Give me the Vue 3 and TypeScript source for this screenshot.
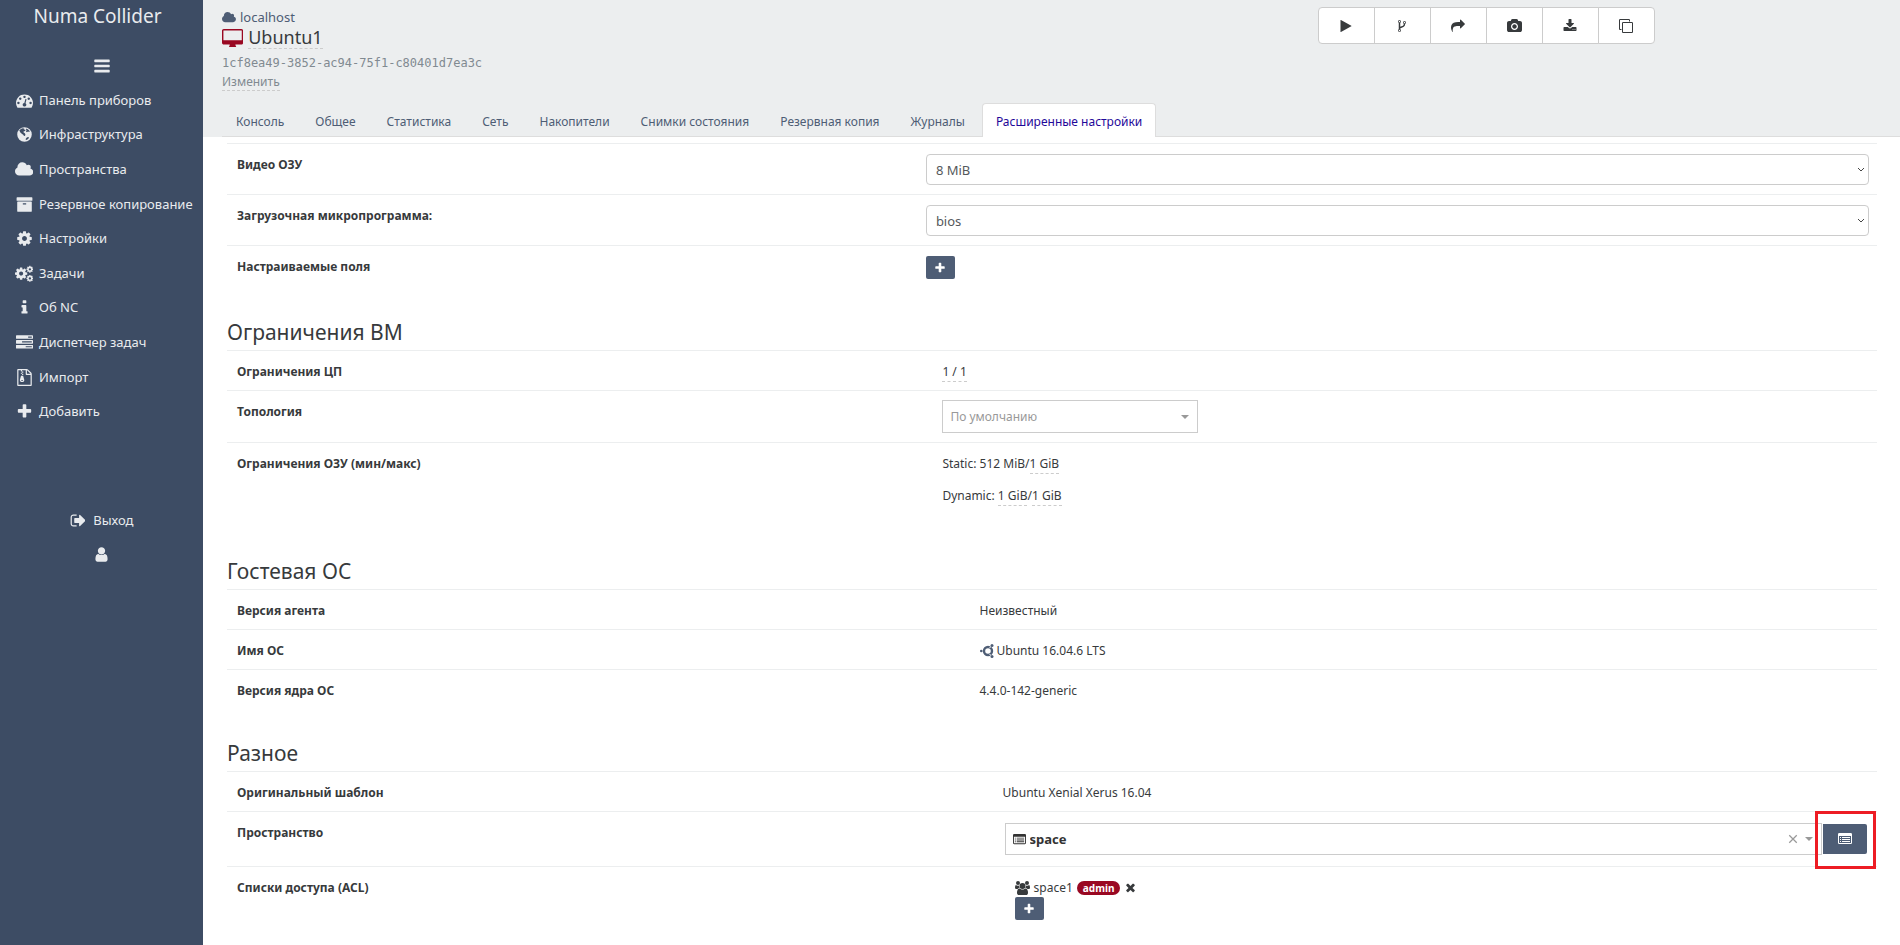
<script setup lang="ts">
import { h, ref, type FunctionalComponent } from 'vue'

interface Glyph {
  box: string
  d: string
}

const square = '0 0 1792 1792'
const cogPath =
  'M1152 896q0-106-75-181t-181-75-181 75-75 181 75 181 181 75 181-75 75-181zm512-109v222q0 12-8 23t-20 13l-185 28q-19 54-39 91 35 50 107 138 10 12 10 25t-9 23q-27 37-99 108t-94 71q-12 0-26-9l-138-108q-44 23-91 38-16 136-29 186-7 28-36 28h-222q-14 0-24.5-8.5t-11.5-21.5l-28-184q-49-16-90-37l-141 107q-10 9-25 9-14 0-25-11-126-114-165-168-7-10-7-23 0-12 8-23 15-21 51-66.5t54-70.5q-27-50-41-99l-183-27q-13-2-21-12.5t-8-23.5v-222q0-12 8-23t19-13l186-28q14-46 39-92-40-57-107-138-10-12-10-24 0-10 9-23 26-36 98.5-107.5t94.5-71.5q13 0 26 10l138 107q44-23 91-38 16-136 29-186 7-28 36-28h222q14 0 24.5 8.5t11.5 21.5l28 184q49 16 90 37l142-107q9-9 24-9 13 0 25 10 129 119 165 170 7 8 7 22 0 12-8 23-15 21-51 66.5t-54 70.5q26 50 41 98l183 28q13 2 21 12.5t8 23.5z'

const glyphs: Record<string, Glyph> = {
  bars: {
    box: square,
    d: 'M1664 1344v128q0 26-19 45t-45 19h-1408q-26 0-45-19t-19-45v-128q0-26 19-45t45-19h1408q26 0 45 19t19 45zm0-512v128q0 26-19 45t-45 19h-1408q-26 0-45-19t-19-45v-128q0-26 19-45t45-19h1408q26 0 45 19t19 45zm0-512v128q0 26-19 45t-45 19h-1408q-26 0-45-19t-19-45v-128q0-26 19-45t45-19h1408q26 0 45 19t19 45z',
  },
  dashboard: {
    box: square,
    d: 'M384 1152q0-53-37.5-90.5t-90.5-37.5-90.5 37.5-37.5 90.5 37.5 90.5 90.5 37.5 90.5-37.5 37.5-90.5zm192-448q0-53-37.5-90.5t-90.5-37.5-90.5 37.5-37.5 90.5 37.5 90.5 90.5 37.5 90.5-37.5 37.5-90.5zm428 481l101-382q6-26-7.5-48.5t-38.5-29.5-48 6.5-30 39.5l-101 382q-60 5-107 43.5t-63 98.5q-20 77 20 146t117 89 146-20 89-117q16-60-6-117t-72-91zm660-33q0-53-37.5-90.5t-90.5-37.5-90.5 37.5-37.5 90.5 37.5 90.5 90.5 37.5 90.5-37.5 37.5-90.5zm-640-640q0-53-37.5-90.5t-90.5-37.5-90.5 37.5-37.5 90.5 37.5 90.5 90.5 37.5 90.5-37.5 37.5-90.5zm448 192q0-53-37.5-90.5t-90.5-37.5-90.5 37.5-37.5 90.5 37.5 90.5 90.5 37.5 90.5-37.5 37.5-90.5zm320 448q0 261-141 483-19 29-54 29h-1402q-35 0-54-29-141-221-141-483 0-182 71-348t191-286 286-191 348-71 348 71 286 191 191 286 71 348z',
  },
  globe: {
    box: square,
    d: 'M896 128a768 768 0 1 0 0 1536a768 768 0 1 0 0-1536zM560 300l170-70 150 60-60 110 130-40 60 100-110 90-80 10-40 110 120 60 90 130-30 160-110 40-90-150-150-90-170-170-90-190zM1090 270l190 90 160 180-30 90-150-60-110 90-100-90 70-110-70-80zM1000 1400l110-170 150-70 120 60-100 160-180 100z',
  },
  cloud: {
    box: '64 0 1920 1792',
    d: 'M1984 1152q0 159-112.5 271.5t-271.5 112.5h-1088q-185 0-316.5-131.5t-131.5-316.5q0-132 71-241.5t187-163.5q-2-28-2-43 0-212 150-362t362-150q158 0 286.5 88t187.5 230q70-62 166-62 106 0 181 75t75 181q0 75-41 138 129 30 213 134.5t84 239.5z',
  },
  archive: {
    box: square,
    d: 'M1088 832q0-26-19-45t-45-19h-256q-26 0-45 19t-19 45 19 45 45 19h256q26 0 45-19t19-45zm576-192v960q0 26-19 45t-45 19h-1408q-26 0-45-19t-19-45v-960q0-26 19-45t45-19h1408q26 0 45 19t19 45zm64-448v256q0 26-19 45t-45 19h-1536q-26 0-45-19t-19-45v-256q0-26 19-45t45-19h1536q26 0 45 19t19 45z',
  },
  cog: { box: square, d: cogPath },
  info: {
    box: square,
    d: 'M1216 1344v128q0 26-19 45t-45 19h-512q-26 0-45-19t-19-45v-128q0-26 19-45t45-19h64v-384h-64q-26 0-45-19t-19-45v-128q0-26 19-45t45-19h384q26 0 45 19t19 45v576h64q26 0 45 19t19 45zm-128-1152v192q0 26-19 45t-45 19h-256q-26 0-45-19t-19-45v-192q0-26 19-45t45-19h256q26 0 45 19t19 45z',
  },
  tasks: {
    box: square,
    d: 'M1024 1408h640v-128h-640v128zm-384-512h1024v-128h-1024v128zm640-512h384v-128h-384v128zm512 832v256q0 26-19 45t-45 19h-1664q-26 0-45-19t-19-45v-256q0-26 19-45t45-19h1664q26 0 45 19t19 45zm0-512v256q0 26-19 45t-45 19h-1664q-26 0-45-19t-19-45v-256q0-26 19-45t45-19h1664q26 0 45 19t19 45zm0-512v256q0 26-19 45t-45 19h-1664q-26 0-45-19t-19-45v-256q0-26 19-45t45-19h1664q26 0 45 19t19 45z',
  },
  zip: {
    box: square,
    d: 'M1596 380q28 28 48 76t20 88v1152q0 40-28 68t-68 28h-1344q-40 0-68-28t-28-68v-1600q0-40 28-68t68-28h896q40 0 88 20t76 48zm-444-244v376h376q-10-29-22-41l-313-313q-12-12-41-22zm384 1528v-1024h-416q-40 0-68-28t-28-68v-416h-768v1536h1280zM512 128h128v128h-128zM640 256h128v128h-128zM512 384h128v128h-128zM640 512h128v128h-128zM530 700h220l120 440q20 100-50 170t-180 70-180-70-50-170zM640 1150q-90 0-90 60t90 60 90-60-90-60z',
  },
  plus: {
    box: square,
    d: 'M1600 736v192q0 40-28 68t-68 28h-416v416q0 40-28 68t-68 28h-192q-40 0-68-28t-28-68v-416h-416q-40 0-68-28t-28-68v-192q0-40 28-68t68-28h416v-416q0-40 28-68t68-28h192q40 0 68 28t28 68v416h416q40 0 68 28t28 68z',
  },
  signOut: {
    box: '0 0 1664 1792',
    d: 'M704 1440q0 4 1 20t.5 26.5-3 23.5-10 19.5-20.5 6.5h-320q-119 0-203.5-84.5t-84.5-203.5v-704q0-119 84.5-203.5t203.5-84.5h320q13 0 22.5 9.5t9.5 22.5q0 4 1 20t.5 26.5-3 23.5-10 19.5-20.5 6.5h-320q-66 0-113 47t-47 113v704q0 66 47 113t113 47h312l11.5 1 11.5 3 8 5.5 7 9 2 13.5zm928-544q0 26-19 45l-544 544q-19 19-45 19t-45-19-19-45v-288h-448q-26 0-45-19t-19-45v-384q0-26 19-45t45-19h448v-288q0-26 19-45t45-19 45 19l544 544q19 19 19 45z',
  },
  user: {
    box: square,
    d: 'M1536 1399q0 109-62.5 187t-150.5 78h-854q-88 0-150.5-78t-62.5-187q0-85 8.5-160.5t31.5-152 58.5-131 94-89 134.5-34.5q131 128 313 128t313-128q76 0 134.5 34.5t94 89 58.5 131 31.5 152 8.5 160.5zm-256-887q0 159-112.5 271.5t-271.5 112.5-271.5-112.5-112.5-271.5 112.5-271.5 271.5-112.5 271.5 112.5 112.5 271.5z',
  },
  desktop: {
    box: '-64 0 1920 1632',
    d: 'M1728 992v-832q0-13-9.5-22.5t-22.5-9.5h-1600q-13 0-22.5 9.5t-9.5 22.5v832q0 13 9.5 22.5t22.5 9.5h1600q13 0 22.5-9.5t9.5-22.5zm128-832v1088q0 66-47 113t-113 47h-544q0 37 16 77.5t32 71 16 43.5q0 26-19 45t-45 19h-512q-26 0-45-19t-19-45q0-14 16-44t32-70 16-78h-544q-66 0-113-47t-47-113v-1088q0-66 47-113t113-47h1600q66 0 113 47t47 113z',
  },
  play: {
    box: square,
    d: 'M1576 927l-1328 738q-23 13-39.5 3t-16.5-36v-1472q0-26 16.5-36t39.5 3l1328 738q23 13 23 31t-23 31z',
  },
  fork: {
    box: square,
    d: 'M672 1472q0-40-28-68t-68-28-68 28-28 68 28 68 68 28 68-28 28-68zm0-1152q0-40-28-68t-68-28-68 28-28 68 28 68 68 28 68-28 28-68zm640 128q0-40-28-68t-68-28-68 28-28 68 28 68 68 28 68-28 28-68zm96 0q0 52-26 96.5t-70 69.5q-2 287-226 414-67 38-203 81-128 40-169.5 71t-41.5 100v26q44 25 70 69.5t26 96.5q0 80-56 136t-136 56-136-56-56-136q0-52 26-96.5t70-69.5v-820q-44-25-70-69.5t-26-96.5q0-80 56-136t136-56 136 56 56 136q0 52-26 96.5t-70 69.5v497q54-26 154-57 55-17 87.5-29.5t70.5-31 59-39.5 40.5-51 28-69.5 8.5-91.5q-44-25-70-69.5t-26-96.5q0-80 56-136t136-56 136 56 56 136z',
  },
  share: {
    box: square,
    d: 'M1792 640q0 26-19 45l-512 512q-19 19-45 19t-45-19-19-45v-256h-224q-98 0-175.5 6t-154 21.5-133 42.5-105.5 69.5-80 101-48.5 138.5-17.5 181q0 55 5 123 0 6 2.5 23.5t2.5 26.5q0 15-8.5 25t-23.5 10q-16 0-28-17-7-9-13-22t-13.5-30-10.5-24q-127-285-127-451 0-199 53-333 162-403 875-403h224v-256q0-26 19-45t45-19 45 19l512 512q19 19 19 45z',
  },
  camera: {
    box: '0 0 1920 1792',
    d: 'M960 672q119 0 203.5 84.5t84.5 203.5-84.5 203.5-203.5 84.5-203.5-84.5-84.5-203.5 84.5-203.5 203.5-84.5zm704-416q106 0 181 75t75 181v896q0 106-75 181t-181 75h-1408q-106 0-181-75t-75-181v-896q0-106 75-181t181-75h224l51-136q19-49 69.5-84.5t103.5-35.5h512q53 0 103.5 35.5t69.5 84.5l51 136h224zm-704 1152q185 0 316.5-131.5t131.5-316.5-131.5-316.5-316.5-131.5-316.5 131.5-131.5 316.5 131.5 316.5 316.5 131.5z',
  },
  download: {
    box: square,
    d: 'M1344 1344q0-26-19-45t-45-19-45 19-19 45 19 45 45 19 45-19 19-45zm256 0q0-26-19-45t-45-19-45 19-19 45 19 45 45 19 45-19 19-45zm128-224v320q0 40-28 68t-68 28h-1472q-40 0-68-28t-28-68v-320q0-40 28-68t68-28h465l135 136q58 56 136 56t136-56l136-136h464q40 0 68 28t28 68zm-325-569q17 41-14 70l-448 448q-18 19-45 19t-45-19l-448-448q-31-29-14-70 17-39 59-39h256v-448q0-26 19-45t45-19h256q26 0 45 19t19 45v448h256q42 0 59 39z',
  },
  clone: {
    box: square,
    d: 'M1664 1632v-1088q0-13-9.5-22.5t-22.5-9.5h-1088q-13 0-22.5 9.5t-9.5 22.5v1088q0 13 9.5 22.5t22.5 9.5h1088q13 0 22.5-9.5t9.5-22.5zm128-1088v1088q0 66-47 113t-113 47h-1088q-66 0-113-47t-47-113v-1088q0-66 47-113t113-47h1088q66 0 113 47t47 113zm-384-384v160h-128v-160q0-13-9.5-22.5t-22.5-9.5h-1088q-13 0-22.5 9.5t-9.5 22.5v1088q0 13 9.5 22.5t22.5 9.5h160v128h-160q-66 0-113-47t-47-113v-1088q0-66 47-113t113-47h1088q66 0 113 47t47 113z',
  },
  listAlt: {
    box: square,
    d: 'M160 128h1472a160 160 0 0 1 160 160v1088a160 160 0 0 1-160 160H160a160 160 0 0 1-160-160V288a160 160 0 0 1 160-160zM128 512v864q0 32 32 32h1472q32 0 32-32V512zM256 640h128v128H256zM512 640h1024v128H512zM256 896h128v128H256zM512 896h1024v128H512zM256 1152h128v128H256zM512 1152h1024v128H512z',
  },
  times: {
    box: square,
    d: 'M1490 1322q0 40-28 68l-136 136q-28 28-68 28t-68-28l-294-294-294 294q-28 28-68 28t-68-28l-136-136q-28-28-28-68t28-68l294-294-294-294q-28-28-28-68t28-68l136-136q28-28 68-28t68 28l294 294 294-294q28-28 68-28t68 28l136 136q28 28 28 68t-28 68l-294 294 294 294q28 28 28 68z',
  },
  users: {
    box: '0 0 1920 1792',
    d: 'M593 896q-162 5-265 128H194q-82 0-138-40.500T0 865q0-353 124-353 6 0 43.500 21t97.500 42.500T384 597q67 0 133-23-5 37-5 66 0 139 81 256zM1664 1533q0 120-73 189.500t-194 69.500H523q-121 0-194-69.500T256 1533q0-53 3.500-103.500t14-109T300 1212t43-97.500 62-81 85.500-53.500T602 960q10 0 43 21.500t73 48 107 48 135 21.500 135-21.500 107-48 73-48 43-21.500q61 0 111.500 20t85.500 53.500 62 81 43 97.500 26.500 108.500 14 109 3.500 103.500zM384 0a256 256 0 1 0 0 512a256 256 0 1 0 0-512zM960 256a384 384 0 1 0 0 768a384 384 0 1 0 0-768zM1920 865q0 78-56 118.500t-138 40.500h-134q-103-123-265-128 81-117 81-256 0-29-5-66 66 23 133 23 59 0 119-21.500t97.500-42.500 43.500-21q124 0 124 353zM1536 0a256 256 0 1 0 0 512a256 256 0 1 0 0-512z',
  },
}

const Icon: FunctionalComponent<{ name: string }> = (props) => {
  const glyph = glyphs[props.name]
  return h('svg', { class: 'glyph', viewBox: glyph.box, 'aria-hidden': 'true' }, [
    h('path', { d: glyph.d, fill: 'currentColor', 'fill-rule': 'evenodd' }),
  ])
}
Icon.props = ['name']

const menu = [
  { icon: 'dashboard', label: 'Панель приборов' },
  { icon: 'globe', label: 'Инфраструктура' },
  { icon: 'cloud', label: 'Пространства' },
  { icon: 'archive', label: 'Резервное копирование' },
  { icon: 'cog', label: 'Настройки' },
  { icon: 'cogs', label: 'Задачи' },
  { icon: 'info', label: 'Об NC' },
  { icon: 'tasks', label: 'Диспетчер задач' },
  { icon: 'zip', label: 'Импорт' },
  { icon: 'plus', label: 'Добавить' },
]

const actions = [
  { icon: 'play', label: 'Запустить' },
  { icon: 'fork', label: 'Быстрый клон' },
  { icon: 'share', label: 'Миграция' },
  { icon: 'camera', label: 'Снимок' },
  { icon: 'download', label: 'Экспорт' },
  { icon: 'clone', label: 'Копировать' },
]

const tabs = [
  'Консоль',
  'Общее',
  'Статистика',
  'Сеть',
  'Накопители',
  'Снимки состояния',
  'Резервная копия',
  'Журналы',
  'Расширенные настройки',
]
const activeTab = ref('Расширенные настройки')

const videoRam = ref('8 MiB')
const firmware = ref('bios')
const topology = ref('')
const space = ref('space')
</script>

<template>
  <div class="app">
    <aside class="sidebar">
      <a class="brand" href="#">Numa Collider</a>
      <button class="toggle" type="button" aria-label="Меню"><Icon name="bars" /></button>
      <nav>
        <ul class="menu">
          <li v-for="item in menu" :key="item.label">
            <a class="menu-link" href="#">
              <span class="menu-icon">
                <svg v-if="item.icon === 'cogs'" class="glyph" viewBox="0 0 1920 1792" aria-hidden="true">
                  <g fill="currentColor" fill-rule="evenodd">
                    <path :d="cogPath" transform="translate(-108 150) scale(.84)" />
                    <path :d="cogPath" transform="translate(1150 30) scale(.47)" />
                    <path :d="cogPath" transform="translate(1150 990) scale(.47)" />
                  </g>
                </svg>
                <Icon v-else :name="item.icon" />
              </span>
              {{ item.label }}
            </a>
          </li>
        </ul>
      </nav>
      <div class="account">
        <a class="account-link" href="#"><Icon name="signOut" />Выход</a>
        <button class="account-link" type="button" aria-label="Пользователь"><Icon name="user" /></button>
      </div>
    </aside>

    <div class="page">
      <header class="header">
        <div class="summary">
          <div class="identity">
            <a class="host" href="#"><Icon name="cloud" />localhost</a>
            <h1 class="vm"><Icon name="desktop" /><span class="editable">Ubuntu1</span></h1>
            <div class="uuid">1cf8ea49-3852-ac94-75f1-c80401d7ea3c</div>
            <div><button class="editable muted" type="button">Изменить</button></div>
          </div>
          <div class="toolbar">
            <div class="actions">
              <button v-for="action in actions" :key="action.icon" type="button" :aria-label="action.label">
                <Icon :name="action.icon" />
              </button>
            </div>
          </div>
        </div>
        <nav class="tabs">
          <a v-for="tab in tabs" :key="tab" href="#" :class="{ active: tab === activeTab }" @click.prevent="activeTab = tab">{{ tab }}</a>
        </nav>
      </header>

      <main class="content">
        <section>
          <table class="general">
            <tbody>
              <tr>
                <th scope="row"><label for="video-ram">Видео ОЗУ</label></th>
                <td>
                  <div class="native">
                    <select id="video-ram" v-model="videoRam">
                      <option>8 MiB</option>
                    </select>
                    <svg class="chevron" viewBox="0 0 8 6" aria-hidden="true"><path d="M1 1l3 3 3-3" /></svg>
                  </div>
                </td>
              </tr>
              <tr>
                <th scope="row"><label for="firmware">Загрузочная микропрограмма:</label></th>
                <td>
                  <div class="native">
                    <select id="firmware" v-model="firmware">
                      <option>bios</option>
                    </select>
                    <svg class="chevron" viewBox="0 0 8 6" aria-hidden="true"><path d="M1 1l3 3 3-3" /></svg>
                  </div>
                </td>
              </tr>
              <tr>
                <th scope="row">Настраиваемые поля</th>
                <td><button class="add" type="button" aria-label="Добавить поле"><Icon name="plus" /></button></td>
              </tr>
            </tbody>
          </table>
        </section>

        <section>
          <h2>Ограничения ВМ</h2>
          <table class="limits">
            <tbody>
              <tr>
                <th scope="row">Ограничения ЦП</th>
                <td><button class="editable" type="button">1 / 1</button></td>
              </tr>
              <tr>
                <th scope="row"><label for="topology">Топология</label></th>
                <td class="control">
                  <div class="combo topology">
                    <select id="topology" v-model="topology">
                      <option value="">По умолчанию</option>
                    </select>
                    <span class="caret"></span>
                  </div>
                </td>
              </tr>
              <tr>
                <th scope="row">Ограничения ОЗУ (мин/макс)</th>
                <td>
                  <p>Static: 512 MiB/<button class="editable" type="button">1 GiB</button></p>
                  <p>Dynamic: <button class="editable" type="button">1 GiB</button>/<button class="editable" type="button">1 GiB</button></p>
                </td>
              </tr>
            </tbody>
          </table>
        </section>

        <section>
          <h2>Гостевая ОС</h2>
          <table class="guest">
            <tbody>
              <tr>
                <th scope="row">Версия агента</th>
                <td>Неизвестный</td>
              </tr>
              <tr>
                <th scope="row">Имя ОС</th>
                <td>
                  <span class="inline">
                    <svg class="ubuntu" viewBox="0 0 14 14" aria-hidden="true">
                      <circle cx="8" cy="7" r="4" fill="none" stroke="currentColor" stroke-width="2.400" />
                      <path d="M9.500 3.500l2-1M9.500 10.500l2 1" stroke="#fff" stroke-width="1" />
                      <circle cx="1.300" cy="7" r="1.300" fill="currentColor" />
                      <circle cx="12" cy="1.600" r="1.500" fill="currentColor" />
                      <circle cx="12" cy="12.400" r="1.500" fill="currentColor" />
                    </svg>
                    Ubuntu 16.04.6 LTS
                  </span>
                </td>
              </tr>
              <tr>
                <th scope="row">Версия ядра ОС</th>
                <td>4.4.0-142-generic</td>
              </tr>
            </tbody>
          </table>
        </section>

        <section>
          <h2>Разное</h2>
          <table class="misc">
            <tbody>
              <tr>
                <th scope="row">Оригинальный шаблон</th>
                <td>Ubuntu Xenial Xerus 16.04</td>
              </tr>
              <tr>
                <th scope="row"><label for="space">Пространство</label></th>
                <td class="control">
                  <div class="space-row">
                    <div class="combo space">
                      <Icon name="listAlt" />
                      <select id="space" v-model="space">
                        <option>space</option>
                      </select>
                      <button class="clear" type="button" aria-label="Очистить">
                        <svg viewBox="0 0 8 8" aria-hidden="true"><path d="M1 1l6 6M7 1l-6 6" /></svg>
                      </button>
                      <span class="caret"></span>
                    </div>
                    <button class="open-space" type="button" aria-label="Открыть пространство"><Icon name="listAlt" /></button>
                  </div>
                </td>
              </tr>
              <tr>
                <th scope="row">Списки доступа (ACL)</th>
                <td>
                  <div class="acl">
                    <div class="acl-item">
                      <Icon name="users" />
                      <span>space1</span>
                      <span class="badge">admin</span>
                      <button class="remove" type="button" aria-label="Удалить"><Icon name="times" /></button>
                    </div>
                    <button class="add" type="button" aria-label="Добавить доступ"><Icon name="plus" /></button>
                  </div>
                </td>
              </tr>
            </tbody>
          </table>
        </section>
      </main>
    </div>
  </div>
</template>

<style>
body {
  margin: 0;
  background: #fff;
}
</style>

<style scoped>
.app {
  display: flex;
  min-height: 100vh;
  color: #373a3c;
  font: 13px/19px 'Noto Sans', sans-serif;
}
* {
  box-sizing: border-box;
}
button,
select {
  margin: 0;
  padding: 0;
  border: 0;
  background: none;
  color: inherit;
  font: inherit;
}
a {
  color: inherit;
  text-decoration: none;
}
.glyph {
  display: block;
  flex: none;
  height: 14px;
}

.sidebar {
  display: flex;
  flex: none;
  flex-direction: column;
  width: 203px;
  background: #3d4c64;
  color: #e9ebee;
}
.brand {
  height: 49px;
  padding-right: 8px;
  font-size: 19px;
  line-height: 32px;
  text-align: center;
}
.toggle {
  display: flex;
  align-items: center;
  justify-content: center;
  height: 34px;
}
.toggle .glyph {
  height: 18px;
}
.menu {
  display: grid;
  grid-template-rows: repeat(10, 1fr);
  min-height: 346px;
  margin: 0;
  padding: 0;
  list-style: none;
}
.menu-link {
  display: flex;
  align-items: center;
  height: 100%;
  padding-left: 14px;
  white-space: nowrap;
}
.menu-icon {
  display: flex;
  justify-content: center;
  width: 20px;
  margin-right: 5px;
}
.menu-icon .glyph {
  height: 17px;
}
.account {
  display: flex;
  flex-direction: column;
  align-items: center;
  margin-top: 74px;
}
.account-link {
  display: flex;
  align-items: center;
  gap: 8px;
  height: 34px;
}
.account-link .glyph {
  height: 17px;
}

.page {
  flex: 1;
  min-width: 0;
}
.header {
  padding-left: 19px;
  background: #eceeef;
}
.summary {
  display: grid;
  grid-template-columns: 11fr 10fr;
  height: 103px;
  padding: 7px 19px 0 0;
}
.identity {
  padding-top: 1px;
}
.host {
  display: flex;
  align-items: center;
  gap: 4px;
  color: #4e5d75;
}
.host .glyph {
  height: 13px;
}
.vm {
  display: flex;
  gap: 5px;
  align-items: center;
  margin: 0;
  font-size: 18px;
  font-weight: 400;
  line-height: 21px;
}
.vm .glyph {
  height: 18px;
  color: #990822;
}
.editable {
  margin-bottom: -1px;
  padding: 0;
  border-bottom: 1px dashed #ccc;
}
.uuid {
  margin-top: 6px;
  color: #818a91;
  font: 12px/18px 'DejaVu Sans Mono', monospace;
}
.muted {
  color: #818a91;
  font-size: 12px;
  line-height: 17px;
}
.toolbar {
  display: flex;
  align-items: flex-start;
  justify-content: center;
}
.actions {
  display: flex;
}
.actions button {
  display: flex;
  align-items: center;
  justify-content: center;
  width: 57px;
  height: 37px;
  border: 1px solid #ccc;
  background: #fff;
}
.actions button + button {
  margin-left: -1px;
}
.actions button:first-child {
  border-radius: 4px 0 0 4px;
}
.actions button:last-child {
  border-radius: 0 4px 4px 0;
}
.tabs {
  display: flex;
  gap: 3px;
  border-bottom: 1px solid #ddd;
  color: #4e5d75;
  font-size: 12px;
}
.tabs a {
  margin-bottom: -1px;
  padding: 8px 13px 6px;
  border: 1px solid transparent;
  border-bottom: 0;
  border-radius: 4px 4px 0 0;
}
.tabs a.active {
  border-color: #ddd;
  background: #fff;
  color: #1f0899;
}

.content {
  padding: 6px 23px 24px 24px;
}
section + section {
  margin-top: 32px;
}
h2 {
  margin: 0;
  padding-bottom: 6px;
  font-size: 21px;
  font-weight: 400;
  line-height: 24px;
}
table {
  width: 100%;
  border-collapse: separate;
  border-spacing: 0;
  font-size: 12px;
  table-layout: fixed;
}
th,
td {
  padding: 11px 10px 9px;
  border-top: 1px solid #eceeef;
  text-align: left;
  vertical-align: top;
}
th {
  font-weight: 700;
}
.general td {
  padding: 10px 8px 9px 10px;
}
td.control {
  padding: 9px 10px;
}
.general th {
  width: 41.75%;
}
.limits th {
  width: 42.75%;
}
.guest th {
  width: 45%;
}
.misc th {
  width: 46.4%;
}
p {
  margin: 0 0 13px;
}
.native,
.combo {
  position: relative;
  display: flex;
}
.native select {
  width: 100%;
  height: 31px;
  padding: 2px 9px 0;
  border: 1px solid #ccc;
  border-radius: 4px;
  background: #fff;
  color: #55595c;
  font-size: 13px;
  appearance: none;
}
.chevron {
  position: absolute;
  top: 13px;
  right: 4px;
  width: 8px;
  height: 6px;
  fill: none;
  stroke: #444;
  stroke-width: 1;
}
.add {
  display: flex;
  align-items: center;
  justify-content: center;
  width: 29px;
  height: 23px;
  border-radius: 2px;
  background: #4e5d75;
  color: #fff;
}
.add .glyph {
  height: 12px;
}
.combo {
  align-items: center;
  border: 1px solid #ccc;
}
.combo select {
  flex: 1;
  height: 30px;
  appearance: none;
}
.topology {
  width: 256px;
  height: 33px;
  color: #999;
}
.topology select {
  padding-left: 7px;
}
.caret {
  position: absolute;
  right: 8px;
  border: 4px solid transparent;
  border-top-color: #999;
  border-bottom: 0;
}
.inline {
  display: flex;
  align-items: center;
  gap: 3px;
}
.ubuntu {
  width: 14px;
  height: 14px;
  color: #4e5d75;
}
.space-row {
  display: flex;
  align-items: center;
  gap: 1px;
  padding: 2px 0 2px 2px;
}
.space {
  flex: 1;
  height: 32px;
  padding-left: 7px;
  color: #333;
}
.space .glyph {
  height: 13px;
}
.space select {
  padding-left: 4px;
  font-size: 13px;
  font-weight: 700;
}
.clear {
  position: absolute;
  right: 23px;
  display: flex;
}
.clear svg {
  width: 10px;
  height: 10px;
  fill: none;
  stroke: #999;
}
.open-space {
  position: relative;
  display: flex;
  align-items: center;
  justify-content: center;
  width: 44px;
  height: 30px;
  border-radius: 0 2px 2px 0;
  background: #4e5d75;
  color: #fff;
}
.open-space::after {
  position: absolute;
  inset: -13px -9px -15px -8px;
  border: 3px solid #ed1c24;
  content: '';
}
.acl {
  padding-left: 12px;
}
.acl-item {
  display: flex;
  align-items: center;
  gap: 4px;
}
.badge {
  padding: 1px 6px;
  border-radius: 8px;
  background: #990822;
  color: #fff;
  font-size: 10px;
  font-weight: 700;
  line-height: 12px;
}
.remove .glyph {
  height: 13px;
}
</style>
